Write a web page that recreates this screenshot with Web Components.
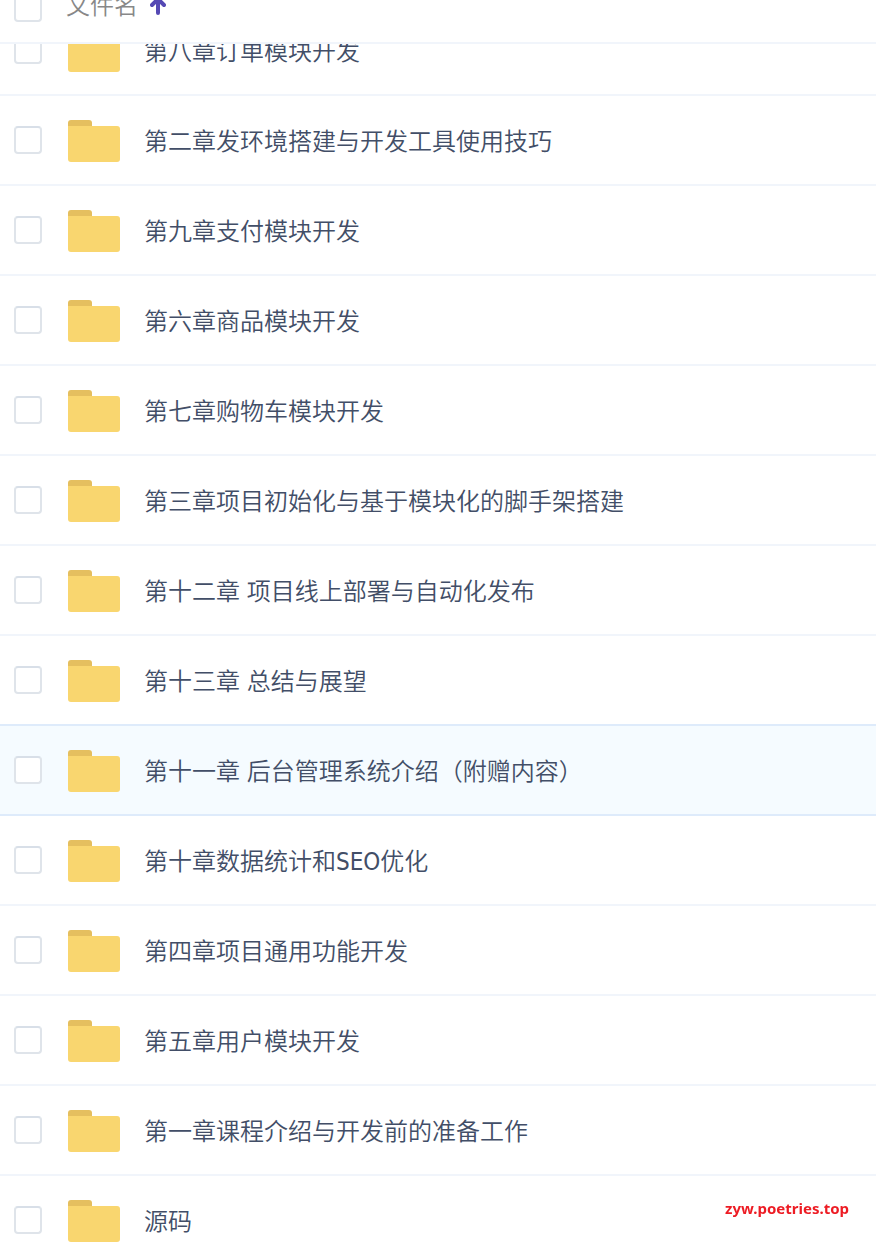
<!DOCTYPE html>
<html lang="zh-CN">
<head>
<meta charset="utf-8">
<meta name="viewport" content="width=device-width, initial-scale=1">
<title>文件列表</title>
<style>
	html,
	body {
		margin: 0;
		background: #fff;
		font-family: "DejaVu Sans Condensed", "Noto Sans CJK SC", sans-serif;
		font-weight: 350;
	}
</style>
</head>
<body>

<template id="check-box">
	<style>
		:host {
			display: block;
			flex: none;
			width: 28px;
			height: 28px;
		}

		input {
			display: block;
			box-sizing: border-box;
			appearance: none;
			width: 100%;
			height: 100%;
			margin: 0;
			border: 2px solid #dfe4ea;
			border-top-color: #d8dfe8;
			border-radius: 4px;
			background: #fff;
		}

		input:checked {
			border-color: #5549b4;
			background: #5549b4;
		}
	</style>
	<input type="checkbox">
</template>

<template id="folder-icon">
	<style>
		:host {
			display: block;
			flex: none;
			width: 52px;
			height: 42px;
		}

		svg {
			display: block;
		}
	</style>
	<svg width="52" height="42" viewBox="0 0 52 42" aria-hidden="true">
		<path fill="#e5bf5f" d="M0 9V3Q0 0 3 0H21Q24 0 24 3V9Z"/>
		<path fill="#f9d66f" d="M0 6H49Q52 6 52 9V39Q52 42 49 42H3Q0 42 0 39Z"/>
	</svg>
</template>

<template id="file-row">
	<style>
		:host {
			display: flex;
			align-items: center;
			box-sizing: border-box;
			height: 92px;
			margin-top: -2px;
			padding: 0 14px;
			border: solid #f1f5fb;
			border-width: 2px 0;
			color: #424e67;
			font-size: 24px;
			line-height: 32px;
		}

		:host([active]) {
			position: relative;
			border-color: #deebfb;
			background: #f5fbff;
		}

		folder-icon {
			margin: 2px 24px 0 26px;
		}

		.name {
			flex: 1;
			min-width: 0;
			padding-top: 4px;
			overflow: hidden;
			text-overflow: ellipsis;
			white-space: nowrap;
		}
	</style>
	<check-box></check-box>
	<folder-icon></folder-icon>
	<div class="name"><slot></slot></div>
</template>

<template id="file-list">
	<style>
		:host {
			display: flex;
			flex-direction: column;
			height: 100vh;
			overflow: hidden;
		}

		header {
			display: flex;
			flex: none;
			align-items: center;
			height: 68px;
			margin-top: -26px;
			padding: 0 14px;
			border-bottom: 2px solid #f1f5fb;
			color: #888;
			font-size: 24px;
			line-height: 32px;
		}

		button {
			display: flex;
			align-items: center;
			gap: 12px;
			margin: 0 0 0 24px;
			padding: 0 0 4px;
			border: 0;
			background: none;
			color: inherit;
			font: inherit;
		}

		.rows {
			flex: 1;
			min-height: 0;
			overflow: hidden;
		}

		.scroller {
			margin-top: -40px;
		}
	</style>
	<header>
		<check-box label="全选"></check-box>
		<button type="button">
			<slot name="heading"></slot>
			<svg width="16" height="20" viewBox="0 0 16 20" aria-hidden="true">
				<path d="M8 17V4M2 9L8 3L14 9" fill="none" stroke="#5549b4" stroke-width="4" stroke-linecap="round" stroke-linejoin="round"/>
			</svg>
		</button>
	</header>
	<div class="rows"><div class="scroller"><slot></slot></div></div>
</template>

<template id="site-mark">
	<style>
		:host {
			position: fixed;
			right: 27px;
			bottom: 26px;
			font: bold 15px/20px "Noto Sans", sans-serif;
		}

		a {
			color: #ed1c24;
			text-decoration: none;
		}
	</style>
	<a href="#"><slot></slot></a>
</template>

<script>
	(function() {
		class TemplateElement extends HTMLElement {
			constructor() {
				super();

				// Gets content from <template> with the same name
				const shadow = this.attachShadow({mode: 'open'});
				const template = document.getElementById(this.localName);
				shadow.appendChild(document.importNode(template.content, true));
			}
		}

		class CheckBox extends TemplateElement {
			static get observedAttributes() {
				return ['label'];
			}

			attributeChangedCallback(attribute, oldVal, newVal) {
				this.shadowRoot.querySelector('input').setAttribute('aria-label', newVal || '');
			}
		}

		class FolderIcon extends TemplateElement {}

		class FileRow extends TemplateElement {
			connectedCallback() {
				this.shadowRoot.querySelector('check-box').setAttribute('label', this.textContent.trim());
			}
		}

		class FileList extends TemplateElement {}

		class SiteMark extends TemplateElement {}

		customElements.define('check-box', CheckBox);
		customElements.define('folder-icon', FolderIcon);
		customElements.define('file-row', FileRow);
		customElements.define('file-list', FileList);
		customElements.define('site-mark', SiteMark);
	})();
</script>

<file-list>
	<span slot="heading">文件名</span>
	<file-row>第八章订单模块开发</file-row>
	<file-row>第二章发环境搭建与开发工具使用技巧</file-row>
	<file-row>第九章支付模块开发</file-row>
	<file-row>第六章商品模块开发</file-row>
	<file-row>第七章购物车模块开发</file-row>
	<file-row>第三章项目初始化与基于模块化的脚手架搭建</file-row>
	<file-row>第十二章 项目线上部署与自动化发布</file-row>
	<file-row>第十三章 总结与展望</file-row>
	<file-row active>第十一章 后台管理系统介绍（附赠内容）</file-row>
	<file-row>第十章数据统计和SEO优化</file-row>
	<file-row>第四章项目通用功能开发</file-row>
	<file-row>第五章用户模块开发</file-row>
	<file-row>第一章课程介绍与开发前的准备工作</file-row>
	<file-row>源码</file-row>
</file-list>
<site-mark>zyw.poetries.top</site-mark>

</body>
</html>
